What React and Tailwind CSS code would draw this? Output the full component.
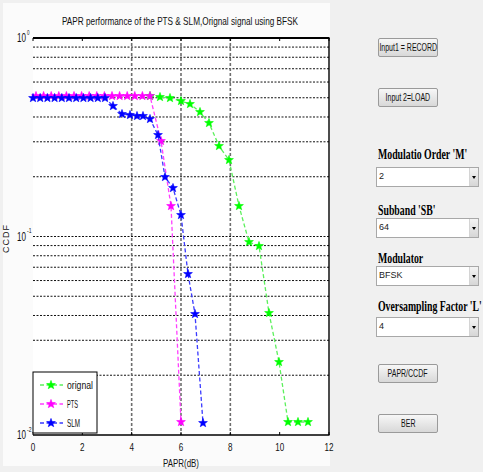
import React from 'react';

const SANS = '"Liberation Sans", Arial, sans-serif';

// plot box in page pixels
const X0 = 33, X1 = 329, Y0 = 38, Y1 = 435;
const py = (p) => Y0 - Math.log10(p) * ((Y1 - Y0) / 2);
const px = (v) => X0 + v * ((X1 - X0) / 12);

const minors = [0.9, 0.8, 0.7, 0.6, 0.5, 0.4, 0.3, 0.2, 0.1, 0.09, 0.08, 0.07, 0.06, 0.05, 0.04, 0.03, 0.02];

function star(cx, cy, R = 4.6, r = 1.9) {
  const pts = [];
  for (let i = 0; i < 10; i++) {
    const a = -Math.PI / 2 + (i * Math.PI) / 5;
    const rad = i % 2 ? r : R;
    pts.push(`${(cx + rad * Math.cos(a)).toFixed(1)},${(cy + rad * Math.sin(a)).toFixed(1)}`);
  }
  return pts.join(' ');
}

const original = [
  [150, 96], [160, 97], [170, 98], [181, 101], [190, 104], [200, 112], [209, 123], [219, 146],
  [229, 160], [239, 206], [249, 242], [259, 246], [269, 313], [279, 362], [288, 422], [298, 422], [308, 422],
];
const pts = [
  ...Array.from({ length: 16 }, (_, i) => [36 + i * 7.6, 96]),
  [161, 141], [171, 206], [181, 422],
];
const slm = [
  ...Array.from({ length: 11 }, (_, i) => [33 + i * 7.2, 98]),
  [113, 106], [122, 114], [130, 115], [137, 116], [143, 116], [150, 119], [158, 135], [165, 177],
  [173, 188], [181, 215], [188, 274], [195, 314], [203, 423],
];

const series = [
  { data: original, line: '#5cf05c', fill: '#00ff00' },
  { data: pts, line: '#ff40ff', fill: '#ff00ff' },
  { data: slm, line: '#3a3aff', fill: '#0000ff' },
];

function Chart() {
  return (
    <svg width="327" height="463" viewBox="3 3 327 463" overflow="visible" className="block overflow-visible">
      {/* title */}
      <text x="62" y="25" fontSize="11" fontFamily={SANS} textLength="236" lengthAdjust="spacingAndGlyphs" fill="#111">
        PAPR performance of the PTS &amp; SLM,Orignal signal using BFSK
      </text>

      {/* axes area */}
      <rect x={X0} y={Y0} width={X1 - X0} height={Y1 - Y0} fill="#fff" />

      {/* horizontal grid */}
      {minors.map((p) => (
        <line key={p} x1={X0} x2={X1} y1={py(p)} y2={py(p)} stroke="#111" strokeWidth="1" strokeDasharray="2 1.5" />
      ))}
      {/* vertical grid */}
      {[4, 6, 8].map((v) => (
        <line key={v} x1={px(v)} x2={px(v)} y1={Y0} y2={Y1} stroke="#6e6e6e" strokeWidth="1.6" strokeDasharray="3 2" />
      ))}

      {/* axes frame */}
      <line x1={X0} x2={X1 + 0.5} y1={Y0} y2={Y0} stroke="#000" strokeWidth="1.8" />
      <line x1={X0} x2={X1 + 0.5} y1={Y1} y2={Y1} stroke="#000" strokeWidth="1.6" />
      <line x1={X1} x2={X1} y1={Y0} y2={Y1} stroke="#000" strokeWidth="1.4" />
      {[0, 2, 4, 6, 8, 10, 12].map((v) => (
        <g key={v}>
          <line x1={px(v)} x2={px(v)} y1={Y1} y2={Y1 - 3} stroke="#000" />
          <line x1={px(v)} x2={px(v)} y1={Y0} y2={Y0 + 3} stroke="#000" />
        </g>
      ))}

      {/* data */}
      {series.map((s, i) => (
        <g key={i}>
          <polyline
            points={s.data.map((d) => d.join(',')).join(' ')}
            fill="none"
            stroke={s.line}
            strokeWidth="1.3"
            strokeDasharray="4 2.5"
          />
          {s.data.map((d, j) => (
            <polygon key={j} points={star(d[0], d[1])} fill={s.fill} stroke={s.fill} strokeWidth="0.6" />
          ))}
        </g>
      ))}

      {/* legend */}
      <rect x={X0} y="372" width="64" height="61" fill="#fff" stroke="#000" strokeWidth="1" />
      {[
        ['orignal', 385, series[0], 26],
        ['PTS', 404, series[1], 11],
        ['SLM', 423, series[2], 13],
      ].map(([label, y, s, w]) => (
        <g key={label}>
          <line x1="40" x2="63" y1={y} y2={y} stroke={s.line} strokeWidth="1.4" strokeDasharray="4 2.5" />
          <polygon points={star(51, y)} fill={s.fill} stroke={s.fill} strokeWidth="0.6" />
          <text x="67" y={y + 4} fontSize="11" fontFamily={SANS} textLength={w} lengthAdjust="spacingAndGlyphs" fill="#111">
            {label}
          </text>
        </g>
      ))}

      {/* y tick labels */}
      {[
        [Y0, '0'],
        [py(0.1), '-1'],
        [Y1, '-2'],
      ].map(([y, e]) => (
        <g key={e} fontFamily={SANS} fill="#111">
          <text x="17" y={y + 4} fontSize="12.5" textLength="9" lengthAdjust="spacingAndGlyphs">10</text>
          <text x="27" y={y - 3.5} fontSize="7" textLength={e.length > 1 ? 4.5 : 2.5} lengthAdjust="spacingAndGlyphs">{e}</text>
        </g>
      ))}

      {/* x tick labels */}
      {[0, 2, 4, 6, 8, 10, 12].map((v) => (
        <text
          key={v}
          x={px(v)}
          y="451"
          fontSize="10.5"
          fontFamily={SANS}
          textAnchor="middle"
          textLength={v >= 10 ? 9 : 4.5}
          lengthAdjust="spacingAndGlyphs"
          fill="#111"
        >
          {v}
        </text>
      ))}

      {/* axis labels */}
      <text x="181" y="467" fontSize="11" fontFamily={SANS} textAnchor="middle" textLength="36" lengthAdjust="spacingAndGlyphs" fill="#111">
        PAPR(dB)
      </text>
      <text
        x="9"
        y="239"
        fontSize="9"
        fontFamily={SANS}
        textAnchor="middle"
        transform="rotate(-90 9 239)"
        textLength="28"
        lengthAdjust="spacing"
        fill="#111"
      >
        CCDF
      </text>
    </svg>
  );
}

function Btn({ children, className }) {
  return (
    <div
      className={`ml-[48px] w-[60px] h-[19px] flex items-center justify-center border border-[#9a9a9a] rounded-[2px] bg-linear-to-b from-[#f7f7f7] to-[#d8d8d8] text-[10px] text-[#111] font-['Liberation_Sans',Arial,sans-serif] ${className}`}
    >
      <span className="inline-block scale-x-[0.7] whitespace-nowrap">{children}</span>
    </div>
  );
}

function Label({ children, className }) {
  return (
    <div className={`ml-[48px] h-[14px] leading-[14px] text-[14px] font-bold text-black whitespace-nowrap font-['Liberation_Serif','Times_New_Roman',serif] ${className}`}>
      <span className="inline-block origin-left scale-x-[0.7]">{children}</span>
    </div>
  );
}

function Select({ value, className }) {
  return (
    <div className={`ml-[46px] w-[103px] h-[20px] flex items-center border border-[#a8a8a8] bg-white ${className}`}>
      <span className="flex-1 pl-[2px] text-[9px] text-[#222] font-['Liberation_Sans',Arial,sans-serif]">{value}</span>
      <div className="w-[9px] h-full flex items-center justify-center border-l border-[#d4d4d4] bg-linear-to-b from-[#f4f4f4] to-[#d6d6d6]">
        <div className="w-0 h-0 border-l-[2.5px] border-r-[2.5px] border-t-[3.5px] border-l-transparent border-r-transparent border-t-black" />
      </div>
    </div>
  );
}

export default function App() {
  return (
    <div className="w-[483px] h-[472px] bg-[#f0f0f0] flex overflow-hidden">
      <div className="ml-[3px] mt-[3px] w-[327px] h-[463px] bg-[#fbfbfb]">
        <Chart />
      </div>

      <div className="flex flex-col w-[153px]">
        <Btn className="mt-[38px]">Input1 = RECORD</Btn>
        <Btn className="mt-[31px]">Input 2=LOAD</Btn>

        <Label className="mt-[41px]">Modulatio Order 'M'</Label>
        <Select className="mt-[5px]" value="2" />

        <Label className="mt-[17px]">Subband 'SB'</Label>
        <Select className="mt-[0px]" value="64" />

        <Label className="mt-[14px]">Modulator</Label>
        <Select className="mt-[0px]" value="BFSK" />

        <Label className="mt-[14px]">Oversampling Factor 'L'</Label>
        <Select className="mt-[3px]" value="4" />

        <Btn className="mt-[27px]">PAPR/CCDF</Btn>
        <Btn className="mt-[31px]">BER</Btn>
      </div>
    </div>
  );
}
